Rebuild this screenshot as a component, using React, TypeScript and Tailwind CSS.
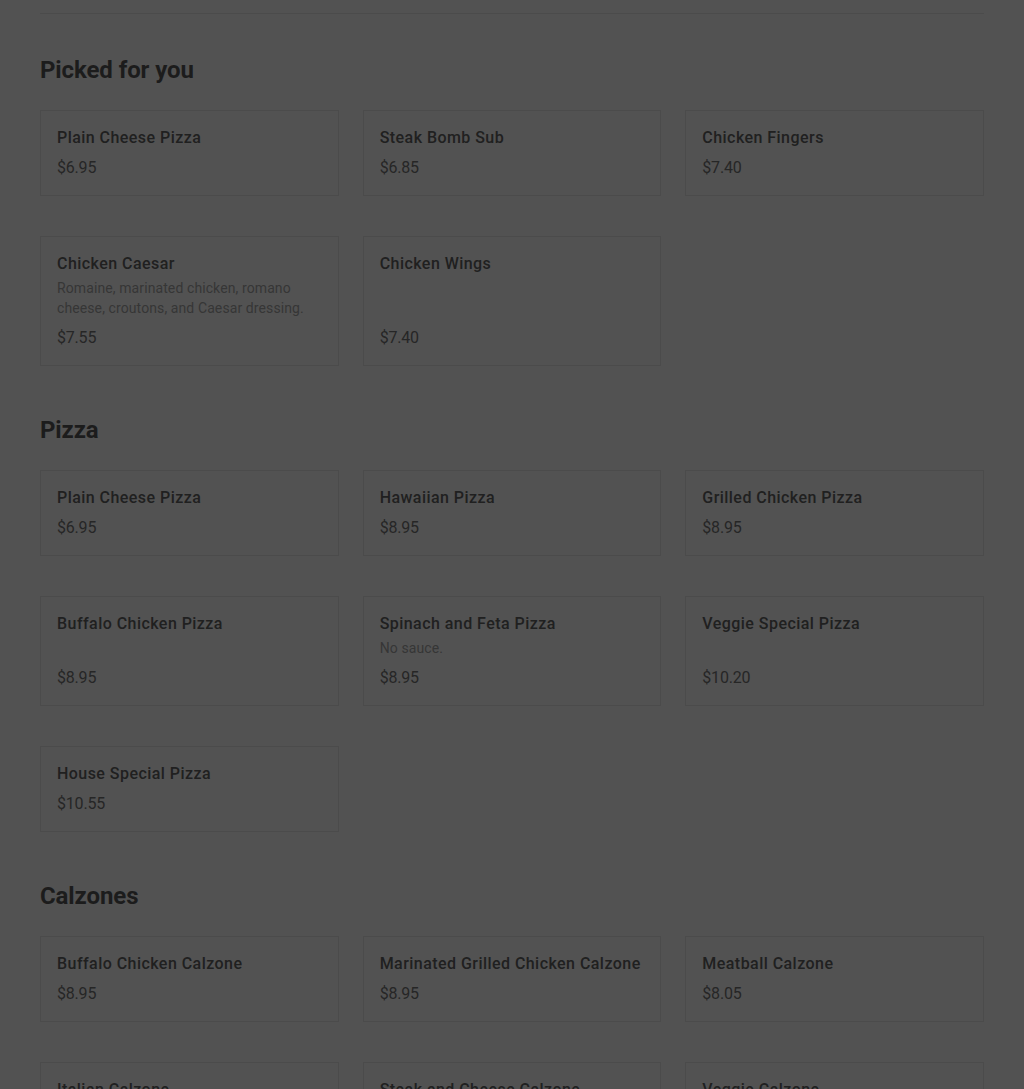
import React from "react";

type Item = { name: string; price: string; desc?: string };

const sections: { title: string; rows: Item[][] }[] = [
  {
    title: "Picked for you",
    rows: [
      [
        { name: "Plain Cheese Pizza", price: "$6.95" },
        { name: "Steak Bomb Sub", price: "$6.85" },
        { name: "Chicken Fingers", price: "$7.40" },
      ],
      [
        {
          name: "Chicken Caesar",
          price: "$7.55",
          desc: "Romaine, marinated chicken, romano cheese, croutons, and Caesar dressing.",
        },
        { name: "Chicken Wings", price: "$7.40" },
      ],
    ],
  },
  {
    title: "Pizza",
    rows: [
      [
        { name: "Plain Cheese Pizza", price: "$6.95" },
        { name: "Hawaiian Pizza", price: "$8.95" },
        { name: "Grilled Chicken Pizza", price: "$8.95" },
      ],
      [
        { name: "Buffalo Chicken Pizza", price: "$8.95" },
        { name: "Spinach and Feta Pizza", price: "$8.95", desc: "No sauce." },
        { name: "Veggie Special Pizza", price: "$10.20" },
      ],
      [{ name: "House Special Pizza", price: "$10.55" }],
    ],
  },
  {
    title: "Calzones",
    rows: [
      [
        { name: "Buffalo Chicken Calzone", price: "$8.95" },
        { name: "Marinated Grilled Chicken Calzone", price: "$8.95" },
        { name: "Meatball Calzone", price: "$8.05" },
      ],
      [
        { name: "Italian Calzone", price: "$8.95" },
        { name: "Steak and Cheese Calzone", price: "$8.95" },
        { name: "Veggie Calzone", price: "$8.95" },
      ],
    ],
  },
];

function Card({ item }: { item: Item }) {
  return (
    <div className="border border-[#4b4b4b] px-4 pt-[17px] pb-[15px] flex flex-col justify-between">
      <div>
        <div className="text-[16px] leading-5 font-medium tracking-[0.45px] text-[#202020] whitespace-nowrap">
          {item.name}
        </div>
        {item.desc && (
          <div className="mt-1 text-[14px] leading-5 tracking-[0.1px] text-[#363636]">{item.desc}</div>
        )}
      </div>
      <div className="mt-2 text-[16px] leading-6 text-[#262626] tracking-[-0.2px]">{item.price}</div>
    </div>
  );
}

export default function App() {
  return (
    <div
      className="min-h-screen bg-[#525252] px-10 overflow-hidden h-[1089px]"
      style={{ fontFamily: "Roboto, 'Liberation Sans', sans-serif" }}
    >
      <div className="h-[14px] border-b border-[#4b4b4b]" />
      {sections.map((s, i) => (
        <section key={s.title} className={i === 0 ? "pt-10" : "pt-12"}>
          <h2 className="text-[24px] leading-8 font-bold tracking-[-0.1px] text-[#1c1c1c] mb-6">
            {s.title}
          </h2>
          <div className="grid grid-cols-3 gap-x-6 gap-y-10">
            {s.rows.flat().map((it, j) => (
              <Card key={j} item={it} />
            ))}
          </div>
        </section>
      ))}
    </div>
  );
}
